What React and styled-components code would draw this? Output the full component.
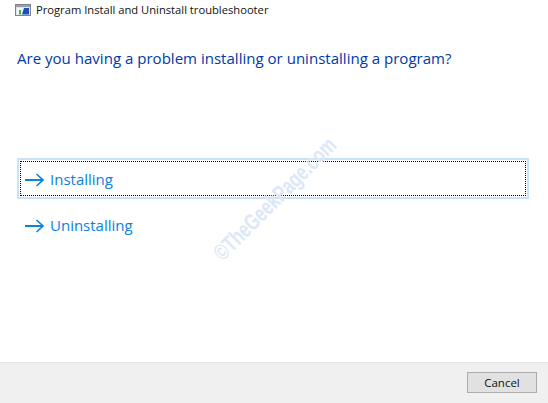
import React from 'react'
import styled, { createGlobalStyle } from 'styled-components'

const GlobalStyle = createGlobalStyle`
  html, body {
    margin: 0;
    padding: 0;
    background: #fff;
  }
  body {
    font-family: "Open Sans", "Noto Sans", "Liberation Sans", sans-serif;
  }
`

const Dialog = styled.div`
  position: relative;
  width: 548px;
  height: 403px;
  display: flex;
  flex-direction: column;
  overflow: hidden;
  background: #fff;
`

const TitleBar = styled.header`
  display: flex;
  align-items: center;
  gap: 5px;
  height: 19px;
  padding-left: 15px;
  font-size: 11.2px;
  color: #111;
`

const Content = styled.main`
  flex: 1;
  display: flex;
  flex-direction: column;
  padding: 0 20px 0 17px;
`

const Heading = styled.h1`
  margin: 28px 0 0;
  font-size: 15.05px;
  line-height: 22px;
  font-weight: 400;
  color: #003aa8;
  white-space: nowrap;
`

const Options = styled.div`
  display: flex;
  flex-direction: column;
  gap: 5px;
  margin-top: 89px;
`

const Option = styled.button`
  display: flex;
  align-items: center;
  gap: 6px;
  width: 512px;
  height: 41px;
  padding: 3px 0 0 6px;
  background: #fff;
  border: 2px solid ${p => (p.$focused ? '#c8e3f9' : 'transparent')};
  outline: ${p => (p.$focused ? '1px dotted #000' : 'none')};
  outline-offset: -4px;
  font-family: inherit;
  font-size: 15px;
  color: #0c80de;
  text-align: left;
`

const OptionLabel = styled.span`
  padding-bottom: 2px;
`

const Footer = styled.footer`
  height: 41px;
  display: flex;
  align-items: center;
  justify-content: flex-end;
  padding: 0 11px 1px 0;
  box-sizing: border-box;
  background: #f0f0f0;
  border-top: 1px solid #e4e4e4;
`

const CancelButton = styled.button`
  width: 70px;
  height: 21px;
  padding: 0 0 1px;
  background: #e1e1e1;
  border: 1px solid #adadad;
  font-family: inherit;
  font-size: 11.5px;
  color: #111;
`

const Watermark = styled.div`
  position: absolute;
  left: 275px;
  top: 199px;
  transform: translate(-50%, -50%) rotate(-45deg) scaleX(0.73);
  font-family: "Liberation Sans", sans-serif;
  font-size: 23px;
  font-weight: 700;
  color: #dde8f7;
  white-space: nowrap;
  pointer-events: none;
`

const AppIcon = () => (
  <svg width="16" height="12" viewBox="0 0 16 12">
    <rect x="0.5" y="0.5" width="15" height="11" fill="#dfe3ea" stroke="#7f8389" />
    <rect x="1" y="1" width="14" height="2" fill="#9aa0a8" />
    <rect x="2" y="4" width="12" height="6.5" fill="#f4f6f8" />
    <path d="M7 10.5L9 4h5v6.5z" fill="#1a4fc0" />
    <rect x="4" y="6" width="2" height="4.5" fill="#49b649" />
  </svg>
)

const Arrow = () => (
  <svg width="19" height="14" viewBox="0 0 19 14" fill="none" stroke="#0a84e0">
    <path d="M0 7h17.5" strokeWidth="2" />
    <path d="M11.5 1l6.5 6-6.5 6" strokeWidth="1.6" />
  </svg>
)

const App = () => {
  return (
    <Dialog>
      <GlobalStyle />
      <TitleBar>
        <AppIcon />
        Program Install and Uninstall troubleshooter
      </TitleBar>
      <Content>
        <Heading>Are you having a problem installing or uninstalling a program?</Heading>
        <Options>
          <Option $focused>
            <Arrow />
            <OptionLabel>Installing</OptionLabel>
          </Option>
          <Option>
            <Arrow />
            <OptionLabel>Uninstalling</OptionLabel>
          </Option>
        </Options>
      </Content>
      <Footer>
        <CancelButton>Cancel</CancelButton>
      </Footer>
      <Watermark>©TheGeekPage.com</Watermark>
    </Dialog>
  )
}

export default App
